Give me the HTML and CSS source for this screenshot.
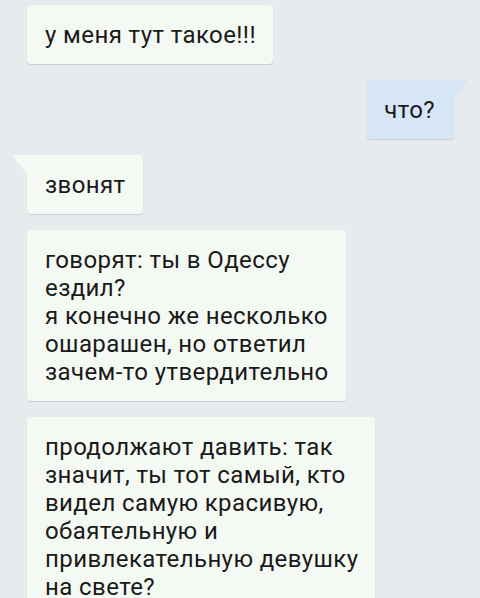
FILE: index.html
```html
<!DOCTYPE html>
<html lang="ru">
<head>
  <meta charset="UTF-8" />
  <meta name="viewport" content="width=device-width, initial-scale=1.0"/>
  <title>Чат</title>
  <link rel="stylesheet" href="styles.css">
</head>
<body>
  <!-- Message list -->
  <div class="chat">
    <div class="msg in">у меня тут такое!!!</div>
    <div class="msg out tail">что?</div>
    <div class="msg in tail">звонят</div>
    <div class="msg in">говорят: ты в Одессу<br>ездил?<br>я конечно же несколько<br>ошарашен, но ответил<br>зачем-то утвердительно</div>
    <div class="msg in">продолжают давить: так<br>значит, ты тот самый, кто<br>видел самую красивую,<br>обаятельную и<br>привлекательную девушку<br>на свете?</div>
  </div>
</body>
</html>
```

FILE: styles.css
```css
* {
  margin: 0;
  padding: 0;
  box-sizing: border-box;
}
body {
  width: 480px;
  height: 598px;
  overflow: hidden;
  background: #e8ebed;
  font-family: Roboto, "Noto Sans", sans-serif;
}
.chat {
  display: flex;
  flex-direction: column;
  gap: 16px;
  padding: 5px 26px 0 27px;
}
.msg {
  position: relative;
  padding: 16px 17px 15px 18px;
  font-size: 24px;
  line-height: 28px;
  letter-spacing: 0.4px;
  color: #1a1a1a;
  border-radius: 4px;
  box-shadow: 0 1px 1px rgba(0, 0, 0, 0.13);
  white-space: nowrap;
}
.msg.in {
  align-self: flex-start;
  background: #f5f9f3;
}
.msg.out {
  align-self: flex-end;
  background: #d6e6f6;
  padding-left: 17px;
  padding-right: 19px;
}

/* little corner tails */
.msg.tail::before {
  content: "";
  position: absolute;
  top: 0;
  width: 15px;
  height: 19px;
}
.msg.in.tail {
  border-top-left-radius: 0;
}
.msg.in.tail::before {
  left: -15px;
  background: #f5f9f3;
  clip-path: polygon(0 0, 100% 0, 100% 100%);
}
.msg.out.tail {
  border-top-right-radius: 0;
}
.msg.out.tail::before {
  right: -13px;
  width: 13px;
  background: #d6e6f6;
  clip-path: polygon(0 0, 100% 0, 0 100%);
}
```
